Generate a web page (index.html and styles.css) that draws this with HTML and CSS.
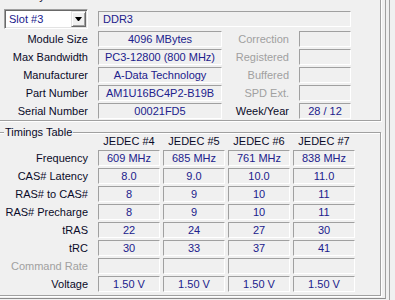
FILE: index.html
```html
<!DOCTYPE html>
<html lang="en">
<head>
    <meta charset="UTF-8">
    <meta name="viewport" content="width=device-width, initial-scale=1.0">
    <title>SPD</title>
    <link rel="stylesheet" href="styles.css">
</head>
<body>
    <div class="window">
        <div class="page">
            <fieldset class="group slot">
                <legend>Memory Slot Selection</legend>
                <div class="slot-grid">
                    <div class="combo">
                        <span class="combo-text">Slot #3</span>
                        <span class="combo-btn"><span class="arrow"></span></span>
                    </div>
                    <div class="field type">DDR3</div>

                    <div class="label">Module Size</div>
                    <div class="field">4096 MBytes</div>
                    <div class="label off">Correction</div>
                    <div class="field"></div>

                    <div class="label">Max Bandwidth</div>
                    <div class="field">PC3-12800 (800 MHz)</div>
                    <div class="label off">Registered</div>
                    <div class="field"></div>

                    <div class="label">Manufacturer</div>
                    <div class="field">A-Data Technology</div>
                    <div class="label off">Buffered</div>
                    <div class="field"></div>

                    <div class="label">Part Number</div>
                    <div class="field">AM1U16BC4P2-B19B</div>
                    <div class="label off">SPD Ext.</div>
                    <div class="field"></div>

                    <div class="label">Serial Number</div>
                    <div class="field">00021FD5</div>
                    <div class="label">Week/Year</div>
                    <div class="field">28 / 12</div>
                </div>
            </fieldset>

            <fieldset class="group timings">
                <legend>Timings Table</legend>
                <div class="timing-grid">
                    <div class="head-row">
                        <div></div>
                        <div class="head">JEDEC #4</div>
                        <div class="head">JEDEC #5</div>
                        <div class="head">JEDEC #6</div>
                        <div class="head">JEDEC #7</div>
                    </div>
                    <div class="label">Frequency</div>
                    <div class="field">609 MHz</div>
                    <div class="field">685 MHz</div>
                    <div class="field">761 MHz</div>
                    <div class="field">838 MHz</div>

                    <div class="label">CAS# Latency</div>
                    <div class="field">8.0</div>
                    <div class="field">9.0</div>
                    <div class="field">10.0</div>
                    <div class="field">11.0</div>

                    <div class="label">RAS# to CAS#</div>
                    <div class="field">8</div>
                    <div class="field">9</div>
                    <div class="field">10</div>
                    <div class="field">11</div>

                    <div class="label">RAS# Precharge</div>
                    <div class="field">8</div>
                    <div class="field">9</div>
                    <div class="field">10</div>
                    <div class="field">11</div>

                    <div class="label">tRAS</div>
                    <div class="field">22</div>
                    <div class="field">24</div>
                    <div class="field">27</div>
                    <div class="field">30</div>

                    <div class="label">tRC</div>
                    <div class="field">30</div>
                    <div class="field">33</div>
                    <div class="field">37</div>
                    <div class="field">41</div>

                    <div class="label off">Command Rate</div>
                    <div class="field"></div>
                    <div class="field"></div>
                    <div class="field"></div>
                    <div class="field"></div>

                    <div class="label">Voltage</div>
                    <div class="field">1.50 V</div>
                    <div class="field">1.50 V</div>
                    <div class="field">1.50 V</div>
                    <div class="field">1.50 V</div>
                </div>
            </fieldset>
        </div>
        <div class="frame"></div>
    </div>
</body>
</html>
```

FILE: styles.css
```css
body {
    margin: 0;
    background-color: #f0f0f0;
    font-family: "Liberation Sans", Arial, sans-serif;
    font-size: 11px;
    color: #0a0a28;
    overflow: hidden;
}
.window {
    display: flex;
    height: 300px;
}
.page {
    box-sizing: border-box;
    width: 389px;
    height: 299px;
    margin-left: -3px;
    padding-right: 4px;
    border-right: 1px solid #a0a0a0;
    border-bottom: 1px solid #8c8c8c;
    overflow: hidden;
}
.frame {
    width: 3px;
    border-right: 1px solid #a0a0a0;
}
.group {
    margin: 0;
    padding: 0 0 0 6px;
    min-width: 0;
    border: 1px solid #a0a0a0;
    box-shadow: inset 1px 1px 0 #fff, 1px 1px 0 #fff;
}
.group legend {
    padding: 0 1px;
    line-height: 13px;
    background-color: #f0f0f0;
}
.slot {
    margin-top: -10px;
    padding-top: 6px;
    padding-bottom: 1px;
}
.timings {
    margin-top: 5px;
    padding-bottom: 3px;
}
.slot-grid {
    display: grid;
    grid-template-columns: 84px 124px 57px 52px;
    column-gap: 10px;
    row-gap: 2px;
}
.timing-grid {
    display: grid;
    grid-template-columns: 91px repeat(4, 62px);
    column-gap: 3px;
    row-gap: 2px;
}
.head-row {
    display: contents;
}
.head {
    margin-top: -4px;
    line-height: 13px;
    text-align: center;
}
.label {
    line-height: 16px;
    text-align: right;
    white-space: nowrap;
}
.timing-grid .label {
    padding-right: 7px;
}
.off {
    color: #a0a0a0;
}
.field {
    box-sizing: border-box;
    height: 16px;
    border: 1px solid;
    border-color: #a0a0a0 #fff #fff #a0a0a0;
    line-height: 14px;
    text-align: center;
    color: #20208c;
    white-space: nowrap;
    overflow: hidden;
}
.type {
    grid-column: 2 / 5;
    align-self: center;
    text-align: left;
    padding-left: 4px;
}
.combo {
    box-sizing: border-box;
    display: flex;
    align-items: center;
    height: 20px;
    padding: 1px;
    border: 1px solid;
    border-color: #a0a0a0 #fff #fff #a0a0a0;
    box-shadow: inset 1px 1px 0 #696969, inset -1px -1px 0 #e3e3e3;
    background-color: #fff;
}
.combo-text {
    flex: 1;
    padding-left: 3px;
    color: #20208c;
}
.combo-btn {
    box-sizing: border-box;
    display: flex;
    align-items: center;
    justify-content: center;
    width: 15px;
    height: 16px;
    border: 1px solid;
    border-color: #e3e3e3 #696969 #696969 #e3e3e3;
    box-shadow: inset 1px 1px 0 #fff, inset -1px -1px 0 #a0a0a0;
    background-color: #f0f0f0;
}
.arrow {
    width: 1px;
    height: 0;
    border-left: 3px solid transparent;
    border-right: 3px solid transparent;
    border-top: 4px solid #000;
}
```
